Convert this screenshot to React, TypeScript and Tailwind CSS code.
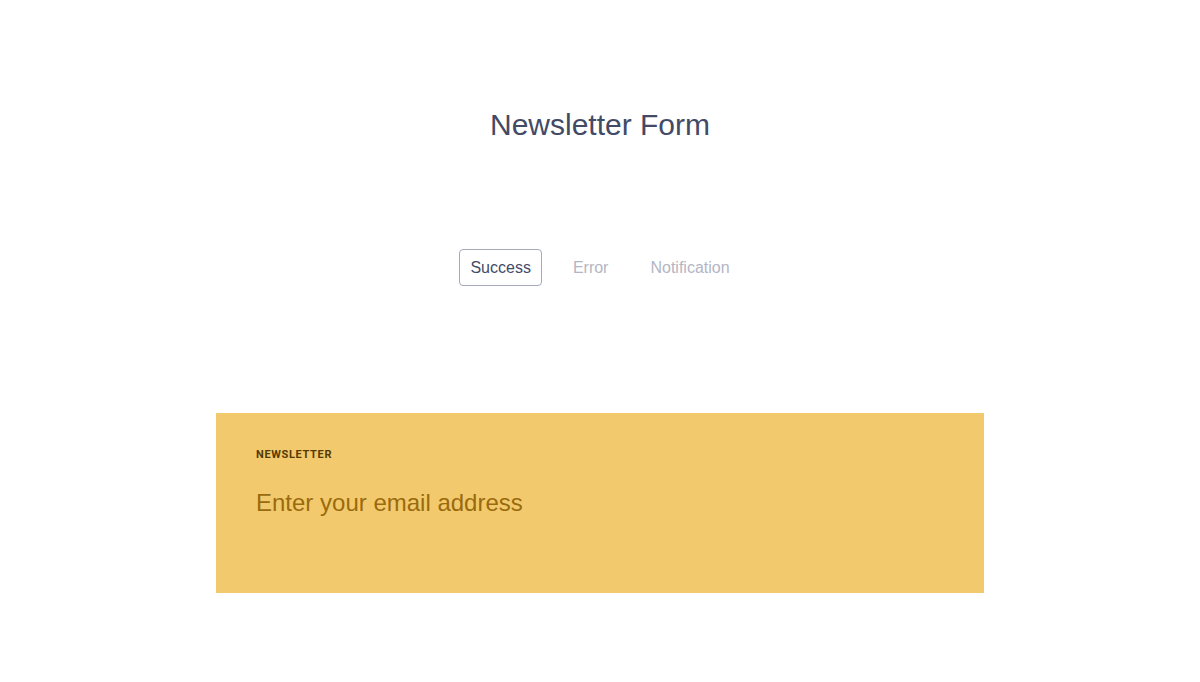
import { useState } from 'react'

const TABS = ['Success', 'Error', 'Notification']

export default function App() {
  const [active, setActive] = useState('Success')

  return (
    <div className="min-h-screen bg-white flex flex-col items-center pt-[107px]" style={{ fontFamily: '"Liberation Sans", Arial, sans-serif' }}>
      <h1 className="text-[30px] leading-[36px] text-[#434a66] m-0">Newsletter Form</h1>

      {/* tabs */}
      <div className="flex items-center gap-5 mt-[106px]">
        {TABS.map(t => (
          <button
            key={t}
            onClick={() => setActive(t)}
            className={`h-[37px] px-[10px] rounded text-[16px] border ${active === t ? 'border-[#a6a9bc] text-[#434a66]' : 'border-transparent text-[#b3b5c3]'}`}
          >
            {t}
          </button>
        ))}
      </div>

      {/* newsletter box */}
      <div className="w-[768px] h-[180px] bg-[#f2ca6d] mt-[127px] px-10 pt-[35px]">
        <div className="text-[11px] leading-[14px] font-bold tracking-[0.06em] text-[#553a05]" style={{ fontFamily: 'Roboto, "Liberation Sans", sans-serif' }}>
          NEWSLETTER
        </div>
        <input
          type="email"
          placeholder="Enter your email address"
          className="mt-[26px] w-full bg-transparent outline-none text-[24px] leading-[30px] text-[#9a6b0e] placeholder:text-[#9a6b0e]"
        />
      </div>
    </div>
  )
}
